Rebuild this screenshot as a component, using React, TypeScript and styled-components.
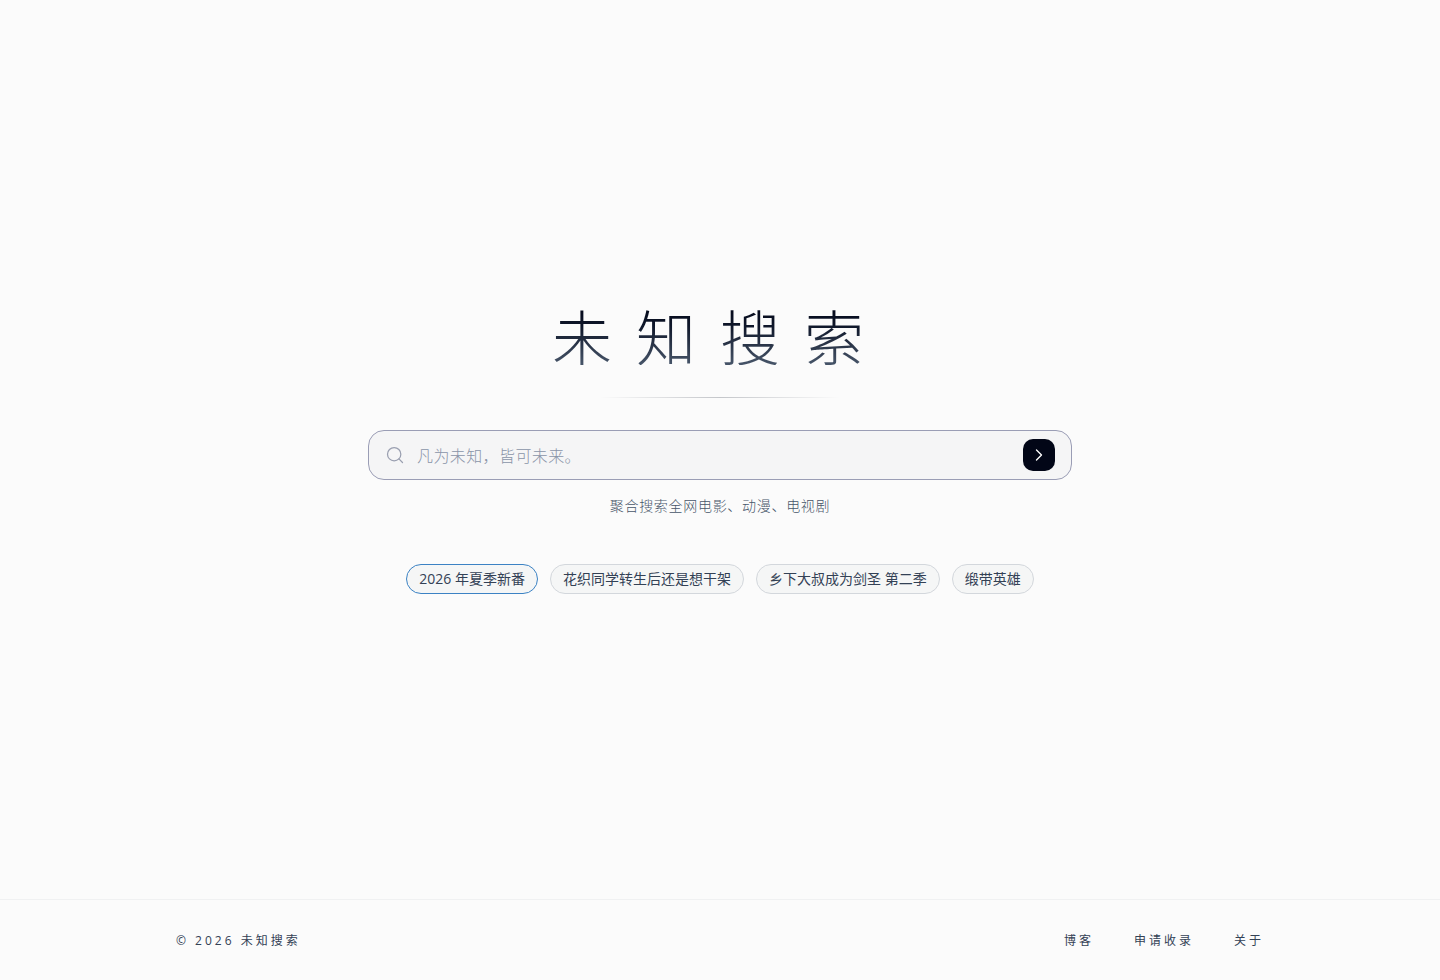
import React, { useState } from "react";
import styled, { createGlobalStyle } from "styled-components";

const GlobalStyle = createGlobalStyle`
  *, *::before, *::after { box-sizing: border-box; }
  body {
    margin: 0;
    background: #fbfbfb;
    color: #334155;
    font-family: "Open Sans", "Noto Sans CJK SC", sans-serif;
  }
`;

const Page = styled.div`
  min-height: 100vh;
  display: flex;
  flex-direction: column;
`;

const Main = styled.main`
  flex: 1;
  display: flex;
  flex-direction: column;
  align-items: center;
  justify-content: center;
  width: 100%;
  max-width: 768px;
  margin: 0 auto;
  padding: 0 32px;
`;

const Title = styled.h1`
  margin: 0;
  font-family: "Noto Sans CJK SC", sans-serif;
  font-size: 60px;
  line-height: 60px;
  font-weight: 300;
  letter-spacing: 0.4em;
  color: transparent;
  background: linear-gradient(to bottom, #020617, #0f172a 35%, #475569);
  background-clip: text;
  -webkit-background-clip: text;
`;

const Divider = styled.div`
  width: 240px;
  max-width: 100%;
  height: 1px;
  margin: 32px 0;
  background: linear-gradient(to right, transparent, #c4c6ca, transparent);
`;

const SearchForm = styled.form`
  width: 100%;
  height: 50px;
  display: flex;
  align-items: center;
  gap: 12px;
  padding: 0 16px;
  border: 1px solid #9a9db5;
  border-radius: 16px;
  background: #f5f5f6;
`;

const SearchInput = styled.input`
  flex: 1;
  min-width: 0;
  height: 100%;
  padding: 0;
  border: 0;
  outline: 0;
  background: transparent;
  color: #1e293b;
  font: 300 16px/24px "Noto Sans CJK SC", sans-serif;
  letter-spacing: 0.025em;
  &::placeholder { color: #8a94a8; opacity: 1; }
`;

const SubmitButton = styled.button`
  display: flex;
  align-items: center;
  justify-content: center;
  width: 32px;
  height: 32px;
  padding: 0;
  border: 0;
  border-radius: 10px;
  background: #020617;
  color: #ffffff;
  cursor: pointer;
`;

const Hint = styled.p`
  margin: 16px 0 48px;
  font-size: 14px;
  line-height: 20px;
  font-weight: 300;
  letter-spacing: 0.05em;
  color: #475569;
`;

const Chips = styled.nav`
  display: flex;
  flex-wrap: wrap;
  justify-content: center;
  gap: 12px;
`;

const Chip = styled.a<{ $active?: boolean }>`
  padding: 4px 12px;
  border: 1px solid ${(p) => (p.$active ? "#3b82c4" : "#d3d7dc")};
  border-radius: 15px;
  background: #f5f6f6;
  color: #334155;
  font-size: 14px;
  line-height: 20px;
  text-decoration: none;
`;

const Footer = styled.footer`
  border-top: 1px solid #f0f1f2;
`;

const FooterInner = styled.div`
  display: flex;
  align-items: center;
  justify-content: space-between;
  max-width: 1152px;
  margin: 0 auto;
  padding: 33px 32px 31px;
  font-size: 12px;
  line-height: 16px;
  letter-spacing: 3px;
`;

const FooterLinks = styled.nav`
  display: flex;
  gap: 40px;
`;

const FooterLink = styled.a`
  color: #334155;
  text-decoration: none;
`;

const SearchIcon = () => (
  <svg width="20" height="20" viewBox="0 0 24 24" fill="none" stroke="#9a9fb0" strokeWidth="1.5" strokeLinecap="round" strokeLinejoin="round" aria-hidden="true">
    <circle cx="11" cy="11" r="8" />
    <path d="m16.7 16.7 4.3 4.3" />
  </svg>
);

const ArrowIcon = () => (
  <svg width="16" height="16" viewBox="0 0 24 24" fill="none" stroke="currentColor" strokeWidth="2" strokeLinecap="round" strokeLinejoin="round" aria-hidden="true">
    <path d="m8.25 4.5 7.5 7.5-7.5 7.5" />
  </svg>
);

const topics = ["2026 年夏季新番", "花织同学转生后还是想干架", "乡下大叔成为剑圣 第二季", "缎带英雄"];
const links = ["博客", "申请收录", "关于"];

export default function App() {
  const [query, setQuery] = useState("");
  return (
    <Page lang="zh-CN">
      <GlobalStyle />
      <Main>
        <Title>未知搜索</Title>
        <Divider />
        <SearchForm role="search" onSubmit={(e) => e.preventDefault()}>
          <SearchIcon />
          <SearchInput
            type="text"
            aria-label="搜索"
            placeholder="凡为未知，皆可未来。"
            value={query}
            onChange={(e) => setQuery(e.target.value)}
          />
          <SubmitButton type="submit" aria-label="搜索">
            <ArrowIcon />
          </SubmitButton>
        </SearchForm>
        <Hint>聚合搜索全网电影、动漫、电视剧</Hint>
        <Chips>
          {topics.map((topic, i) => (
            <Chip key={topic} href="#" $active={i === 0}>{topic}</Chip>
          ))}
        </Chips>
      </Main>
      <Footer>
        <FooterInner>
          <span>© 2026 未知搜索</span>
          <FooterLinks>
            {links.map((link) => (
              <FooterLink key={link} href="#">{link}</FooterLink>
            ))}
          </FooterLinks>
        </FooterInner>
      </Footer>
    </Page>
  );
}
